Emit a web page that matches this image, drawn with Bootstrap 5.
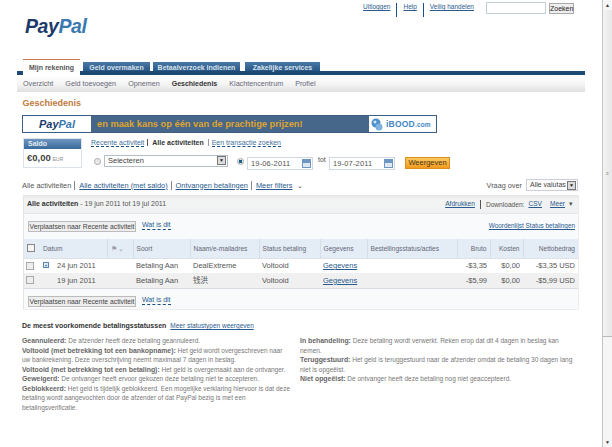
<!doctype html>
<html lang="nl">
<head>
<meta charset="utf-8">
<title>Geschiedenis - PayPal</title>
<link href="https://cdn.jsdelivr.net/npm/bootstrap@5.3.0/dist/css/bootstrap.min.css" rel="stylesheet">
<style>
html,body{height:447px;overflow:hidden}
body{font-family:"Liberation Sans",Arial,"Noto Sans CJK SC",sans-serif;font-size:7px;line-height:9.4px;color:#555;background:#fff}
a{color:#2a5a8e}
.shell{height:447px}
.pagearea{width:602px;flex:none}
.sbar{width:10px;flex:none;background:#f6f6f6;border-left:1px solid #c4c4c4;color:#333;font-size:5px;line-height:10px}
.sthumb{height:327px;background:linear-gradient(90deg,#f4f4f4,#e6e6e6);border-bottom:1px solid #bbb;color:#888}
.topbar{height:17px;padding-top:2px}
.toplinks{margin:1px 0 0 363px;width:106px;line-height:8px;font-size:6.5px}
.toplinks a+a{border-left:1px solid #1c4f86}
.toplinks a{padding:0 6px;}
.toplinks a:first-child{padding-left:0}
.toplinks a:last-child{padding-right:0}
.srch{width:60px;height:12px;min-height:0;margin-left:17px;border:1px solid #c5cfd9;padding:0;border-radius:0}
.srchbtn{width:25px;height:11px;margin:1px 0 0 3px;background:#eee;border:1px solid #aaa;font-size:7px;line-height:9px;padding:0;border-radius:0;color:#222}
.logo{height:42px;margin-left:25px;margin-top:-1px;margin-bottom:1px;font-size:19.5px;line-height:20px;font-weight:700;font-style:italic;letter-spacing:-.4px;color:#1b3a6b}
.logo i{color:#3a78b0}
.tabsrow{margin:0 17px;height:16px;border-bottom:4px solid #1c4a75;gap:3px;padding-left:6px}
.tabi{height:9px;margin-top:3px;background:linear-gradient(#4a78a6,#2a5886);color:#d8e2ec;font-weight:700;font-size:7px;line-height:12px;text-align:center;text-decoration:none}
.tabi.on{height:16px;width:57px;margin-top:0;background:#fff;color:#555;border-top:1px solid #c9784a;line-height:16px;position:relative}
.tabwa{width:67px}.tabwb{width:87px}.tabwc{width:75px;margin-left:2px}
.subnav{margin:0 17px;height:17px;background:linear-gradient(#fff,#f4f4f4 55%,#dfdfdf);gap:12px;padding-left:6px;line-height:17px;font-size:7.2px}
.subnav a{text-decoration:none;color:#667}
.subnav a.on{color:#333;font-weight:700;font-size:7px}
.pagetitle{margin:6px 0 0 22.5px;font-size:9px;line-height:11px;font-weight:700;color:#c07a3e;height:17px}
.promo{margin-left:22px;width:415px;height:18px;border:1px solid #3d5f82}
.pl{width:68px;background:#fff;text-align:center;font-weight:700;font-style:italic;font-size:11px;line-height:16px;color:#1b3a6b}
.pl i{color:#3a78b0}
.pm{flex:1;background:#46668a;color:#dfa52e;font-size:9.3px;font-weight:700;line-height:16px;padding-left:6px;white-space:nowrap}
.pr{width:67px;background:#fff;color:#3f87c4;font-weight:700;font-size:8.5px;line-height:16px;gap:3px;padding-left:2px;letter-spacing:.2px}
.pr small{font-size:6.5px}
.saldorow{margin:5px 0 0 23px;height:41px}
.saldobox{width:59px;height:30px;border:1px solid #dde3ea}
.saldohd{height:10px;background:linear-gradient(#6d96c0,#3a6a9a);color:#e4edf5;font-weight:700;line-height:10px;padding-left:4px}
.saldoval{color:#444;font-weight:700;font-size:9.5px;line-height:17px;padding-left:3px}
.saldoval span{font-size:5px;font-weight:400;color:#888;margin-left:2px}
.rightform{margin-left:9px;width:370px}
.acttabs{height:17px;line-height:9px;white-space:nowrap}
.acttabs a{text-decoration:none;border-bottom:1px dashed #1c4f86;color:#44709c}
.acttabs b{color:#333;border-left:1px solid #555;border-right:1px solid #999;padding:0 4px;margin:0 3px}
.ctlrow{height:20px}
.radiod{width:7px;height:7px;border-radius:50%;border:1px solid #aaa;background:#e9e9e9;margin:3px 0 0 3px;flex:none}
.radiod.sel{margin-left:9px;background:radial-gradient(#1c5f84 40%,#dfe7ee 50%)}
.selbox{width:124px;height:12px;margin:0 0 0 3px;border:1px solid #b5bfc8;color:#444;font-size:7.5px;line-height:10px;padding-left:3px;position:relative}
.selarr{width:9px;height:9px;background:#ddd;border:1px solid #777;font-size:5px;line-height:7px;text-align:center;color:#222;margin:0 1px 0 0;flex:none}
.datebx{width:66px;height:13px;margin:2px 0 0 3px;border:1px solid #cfd8e0;color:#555;font-size:7.5px;line-height:12px;padding-left:3px;letter-spacing:.15px}
.cal{width:9px;height:9px;margin:1px 1px 0 0;border:1px solid #6d96c0;background:linear-gradient(#6d96c0 3px,#dde8f2 3px);flex:none}
.tot{margin:0 4px 0 5px;width:7px}
.datebx.second{margin-left:0}
.goBtn{width:45px;height:12px;margin:2px 0 0 10px;padding:0;border:1px solid #d98e1e;border-radius:0;background:linear-gradient(#fcc862,#f19a1e);color:#4a3510;font-size:7.5px;line-height:10px}
.filters{height:12px;margin:0 0 0 22px;width:556px;line-height:9px;white-space:nowrap;font-size:7.4px}
.filters a{margin-left:3px;padding-left:4px;border-left:1px solid #888}
.vraag{margin-left:auto;font-size:7.3px;color:#555}
.valsel{width:52px;height:12px;margin-left:4px;border:1px solid #ccd;color:#444;line-height:10px;padding-left:3px;font-size:7px}
.valsel .selarr{margin-top:1px}
.panel{margin:4px 0 0 23px;width:556px;height:115px;background:#f8fafc;border-left:1px solid #e5e5e5;border-right:1px solid #eee;border-bottom:1px solid #eee}
.panelhd{height:19px;line-height:18px;background:linear-gradient(#e5e5e5,#f3f3f3 25%,#eff1f3);padding:0 5px 0 3px;border-bottom:1px solid #e3e6ea;color:#555}
.panelhd b{color:#333}
.hdlinks{font-size:6.6px}
.hdlinks a+span{border-left:1px solid #555;margin-left:5px;padding-left:5px;line-height:9px}
.moveBtn{height:11px;width:108px;padding:0;margin-right:6px;background:#eee;border:1px solid #bbb;border-radius:0;font-size:6.8px;line-height:9px;color:#444;white-space:nowrap}
.btnrow{height:25px;padding:7px 3px 0 4px}
.btnrow.low{padding-top:7px}
.dashed{border-bottom:1px dashed #1c4f86;text-decoration:none;height:10px;margin-top:-1px}
.glossary{font-size:6.4px}
.gridtbl{width:554px;table-layout:fixed;margin:0;font-size:7px;border-collapse:collapse}
.gridtbl th{height:19px;padding:0 3px;background:#e4edf5;font-weight:400;color:#667;border-left:1px solid #d5dde6;font-size:6.6px;white-space:nowrap;vertical-align:middle}
.gridtbl th.nob{border-left:none}
.gridtbl td{height:15px;padding:0 3px;border:0;color:#555;font-size:7.5px;background:#fff;white-space:nowrap;vertical-align:middle}
.gridtbl tr.alt td{height:15px;background:#f0f0f0;border-bottom:1px solid #d8dde3}
.gridtbl td:first-child,.gridtbl th:first-child{padding:0}
.gridtbl td:nth-child(2){padding:0 2px}
.tr{text-align:right}
.cb{display:block;width:8px;height:8px;border:1px solid #aaa;background:#eee;margin-left:2px}
.cb.big{background:#f4f4f4;border-color:#888;margin-left:3px}
.plus{display:inline-block;width:6px;height:6px;border:1px solid #5b86b2;font-size:5px;line-height:4px;text-align:center;color:#1c4f86;margin:0 8px 0 1px;background:#e4edf5;vertical-align:1px}
.flagic{color:#99a;font-size:7px}
.notes{margin:11px 0 0 22px;width:556px}
.notestitle{color:#333;font-weight:700;font-size:7px;line-height:10px;height:15.3px}
.notestitle a{font-weight:400;margin-left:2px;font-size:6.5px}
.ncol{color:#777;line-height:9.5px;font-size:6.5px}
.ncol b{color:#666;font-size:6.9px}
.ncl{width:270px;margin-right:8px}
.ncr{width:278px}
</style>
</head>
<body>
<div class="shell d-flex">
  <div class="pagearea">
    <div class="topbar d-flex">
      <div class="toplinks d-flex text-nowrap"><a href="#">Uitloggen</a><a href="#">Help</a><a href="#">Veilig handelen</a></div>
      <input class="srch form-control" type="text" aria-label="Zoeken">
      <button class="srchbtn btn">Zoeken</button>
    </div>
    <div class="logo">Pay<i>Pal</i></div>
    <div class="tabsrow d-flex">
      <a class="tabi on" href="#">Mijn rekening</a>
      <a class="tabi tabwa" href="#">Geld overmaken</a>
      <a class="tabi tabwb" href="#">Betaalverzoek indienen</a>
      <a class="tabi tabwc" href="#">Zakelijke services</a>
    </div>
    <div class="subnav d-flex">
      <a href="#">Overzicht</a><a href="#">Geld toevoegen</a><a href="#">Opnemen</a><a class="on" href="#">Geschiedenis</a><a href="#">Klachtencentrum</a><a href="#">Profiel</a>
    </div>
    <div class="pagetitle">Geschiedenis</div>
    <div class="promo d-flex">
      <div class="pl">Pay<i>Pal</i></div>
      <div class="pm">en maak kans op één van de prachtige prijzen!</div>
      <div class="pr d-flex align-items-center">
        <svg width="12" height="13" viewBox="0 0 12 13" aria-hidden="true"><circle cx="5" cy="5" r="4.5" fill="#4d8fc9"/><circle cx="8" cy="9" r="3.5" fill="#7db2de"/><circle cx="4" cy="4" r="1.5" fill="#d5e6f4"/></svg>
        <span>iBOOD<small>.com</small></span>
      </div>
    </div>
    <div class="saldorow d-flex">
      <div class="saldobox">
        <div class="saldohd">Saldo</div>
        <div class="saldoval">€0,00<span>EUR</span></div>
      </div>
      <div class="rightform">
        <div class="acttabs"><a href="#">Recente activiteit</a><b>Alle activiteiten</b><a href="#">Een transactie zoeken</a></div>
        <div class="ctlrow d-flex">
          <span class="radiod"></span>
          <div class="selbox d-flex justify-content-between"><span>Selecteren</span><span class="selarr">▼</span></div>
          <span class="radiod sel"></span>
          <div class="datebx d-flex justify-content-between"><span>19-06-2011</span><span class="cal"></span></div>
          <span class="tot">tot</span>
          <div class="datebx second d-flex justify-content-between"><span>19-07-2011</span><span class="cal"></span></div>
          <button class="goBtn btn">Weergeven</button>
        </div>
      </div>
    </div>
    <div class="filters d-flex align-items-center">
      <span>Alle activiteiten</span><a href="#">Alle activiteiten (met saldo)</a><a href="#">Ontvangen betalingen</a><a href="#">Meer filters</a><span class="ms-1">⌄</span>
      <span class="vraag">Vraag over</span>
      <div class="valsel d-flex justify-content-between"><span>Alle valutas</span><span class="selarr">▼</span></div>
    </div>
    <div class="panel">
      <div class="panelhd d-flex justify-content-between">
        <span><b>Alle activiteiten</b> - 19 jun 2011 tot 19 jul 2011</span>
        <span class="hdlinks d-flex align-items-center"><a href="#">Afdrukken</a><span>Downloaden:</span><a class="ms-1" href="#">CSV</a><a class="ms-2 me-1" href="#">Meer</a>▾</span>
      </div>
      <div class="btnrow d-flex align-items-start">
        <button class="moveBtn btn">Verplaatsen naar Recente activiteit</button>
        <a class="dashed" href="#">Wat is dit</a>
        <a class="glossary ms-auto" href="#">Woordenlijst Status betalingen</a>
      </div>
      <table class="gridtbl table">
        <colgroup><col style="width:16px"><col style="width:67px"><col style="width:26px"><col style="width:57px"><col style="width:69px"><col style="width:61px"><col style="width:47px"><col style="width:90px"><col style="width:33px"><col style="width:33px"><col style="width:55px"></colgroup>
        <thead><tr>
          <th class="nob"><span class="cb big"></span></th><th class="nob">Datum</th><th><span class="flagic">⚑ ⌄</span></th><th>Soort</th><th>Naam/e-mailadres</th><th>Status betaling</th><th>Gegevens</th><th>Bestellingsstatus/acties</th><th class="tr">Bruto</th><th class="tr">Kosten</th><th class="tr">Nettobedrag</th>
        </tr></thead>
        <tbody>
          <tr><td><span class="cb"></span></td><td><span class="plus">+</span>24 jun 2011</td><td></td><td>Betaling Aan</td><td>DealExtreme</td><td>Voltooid</td><td><a href="#">Gegevens</a></td><td></td><td class="tr">-$3,35</td><td class="tr">$0,00</td><td class="tr">-$3,35 USD</td></tr>
          <tr class="alt"><td><span class="cb"></span></td><td><span class="plus invisible">+</span>19 jun 2011</td><td></td><td>Betaling Aan</td><td>钱洪</td><td>Voltooid</td><td><a href="#">Gegevens</a></td><td></td><td class="tr">-$5,99</td><td class="tr">$0,00</td><td class="tr">-$5,99 USD</td></tr>
        </tbody>
      </table>
      <div class="btnrow low d-flex align-items-start">
        <button class="moveBtn btn">Verplaatsen naar Recente activiteit</button>
        <a class="dashed" href="#">Wat is dit</a>
      </div>
    </div>
    <div class="notes">
      <div class="notestitle">De meest voorkomende betalingsstatussen <a href="#">Meer statustypen weergeven</a></div>
      <div class="d-flex">
        <div class="ncol ncl">
          <b>Geannuleerd:</b> De afzender heeft deze betaling geannuleerd.<br>
          <b>Voltooid (met betrekking tot een bankopname):</b> Het geld wordt overgeschreven naar uw bankrekening. Deze overschrijving neemt maximaal 7 dagen in beslag.<br>
          <b>Voltooid (met betrekking tot een betaling):</b> Het geld is overgemaakt aan de ontvanger.<br>
          <b>Geweigerd:</b> De ontvanger heeft ervoor gekozen deze betaling niet te accepteren.<br>
          <b>Geblokkeerd:</b> Het geld is tijdelijk geblokkeerd. Een mogelijke verklaring hiervoor is dat deze betaling wordt aangevochten door de afzender of dat PayPal bezig is met een betalingsverificatie.
        </div>
        <div class="ncol ncr">
          <b>In behandeling:</b> Deze betaling wordt verwerkt. Reken erop dat dit 4 dagen in beslag kan nemen.<br>
          <b>Teruggestuurd:</b> Het geld is teruggestuurd naar de afzender omdat de betaling 30 dagen lang niet is opgeëist.<br>
          <b>Niet opgeëist:</b> De ontvanger heeft deze betaling nog niet geaccepteerd.
        </div>
      </div>
    </div>
  </div>
  <div class="sbar d-flex flex-column text-center">
    <div>▲</div>
    <div class="sthumb d-flex align-items-center justify-content-center">≡</div>
    <div class="flex-grow-1"></div>
    <div>▼</div>
  </div>
</div>
</body>
</html>
